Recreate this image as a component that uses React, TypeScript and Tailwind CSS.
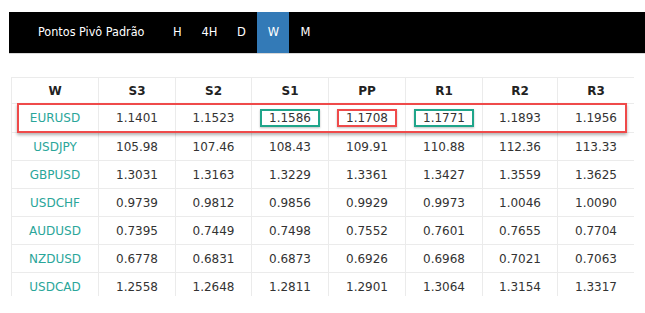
const tabs = ["H", "4H", "D", "W", "M"];

const cols = ["W", "S3", "S2", "S1", "PP", "R1", "R2", "R3"];

const rows: [string, string[]][] = [
  ["EURUSD", ["1.1401", "1.1523", "1.1586", "1.1708", "1.1771", "1.1893", "1.1956"]],
  ["USDJPY", ["105.98", "107.46", "108.43", "109.91", "110.88", "112.36", "113.33"]],
  ["GBPUSD", ["1.3031", "1.3163", "1.3229", "1.3361", "1.3427", "1.3559", "1.3625"]],
  ["USDCHF", ["0.9739", "0.9812", "0.9856", "0.9929", "0.9973", "1.0046", "1.0090"]],
  ["AUDUSD", ["0.7395", "0.7449", "0.7498", "0.7552", "0.7601", "0.7655", "0.7704"]],
  ["NZDUSD", ["0.6778", "0.6831", "0.6873", "0.6926", "0.6968", "0.7021", "0.7063"]],
  ["USDCAD", ["1.2558", "1.2648", "1.2811", "1.2901", "1.3064", "1.3154", "1.3317"]],
];

const widths = ["w-[87px]", "w-[77px]", "w-[76px]", "w-[77px]", "w-[77px]", "w-[77px]", "w-[75px]", "w-[77px]"];

// S1 and R1 get a green box, PP a red one
function Marked({ value, col }: { value: string; col: string }) {
  if (col === "S1" || col === "R1") {
    return (
      <span className="inline-block border-2 border-[#1fa58a] px-[7px] leading-[14px] shadow-[0_1px_2px_rgba(0,0,0,0.25)]">
        {value}
      </span>
    );
  }
  if (col === "PP") {
    return (
      <span className="inline-block border-2 border-[#ef4a4a] px-[7px] leading-[14px] shadow-[0_1px_2px_rgba(0,0,0,0.25)]">
        {value}
      </span>
    );
  }
  return <>{value}</>;
}

export default function App() {
  return (
    <div className="h-[313px] w-[645px] overflow-hidden bg-white pt-3 font-['DejaVu_Sans',Verdana,sans-serif]">
      <nav className="ml-[9px] flex h-[42px] items-stretch border-b border-[#d8d8d8] bg-black text-white">
        <div className="flex items-center pl-[29px] pr-[17px] font-['DejaVu_Sans_Condensed','DejaVu_Sans',sans-serif] text-[12.5px]">
          Pontos Pivô Padrão
        </div>
        {tabs.map((t) => (
          <div
            key={t}
            className={`flex w-[32px] items-center justify-center text-[11.5px] ${
              t === "W" ? "bg-[#337ab7]" : ""
            }`}
          >
            {t}
          </div>
        ))}
      </nav>

      <div className="relative ml-[11px] mt-[23px] h-[219px] w-[623px] overflow-hidden">
        <table className="w-[623px] table-fixed border-collapse text-[12px]">
          <colgroup>
            {widths.map((w, i) => (
              <col key={i} className={w} />
            ))}
          </colgroup>
          <thead>
            <tr className="h-[26px]">
              {cols.map((c) => (
                <th key={c} className="border border-[#ebebeb] text-center font-bold text-[#222]">
                  {c}
                </th>
              ))}
            </tr>
          </thead>
          <tbody>
            {rows.map(([sym, vals], r) => (
              <tr key={sym} className={r === 0 ? "h-[29px]" : "h-[28px]"}>
                <td className="border border-[#ebebeb] text-center text-[#2aa69a]">{sym}</td>
                {vals.map((v, i) => (
                  <td key={i} className="border border-[#ebebeb] text-center text-[#333]">
                    {r === 0 ? <Marked value={v} col={cols[i + 1]} /> : v}
                  </td>
                ))}
              </tr>
            ))}
          </tbody>
        </table>
        <div className="absolute left-[6px] top-[26px] h-[30px] w-[610px] border-2 border-[#ef4a4a] shadow-[0_2px_3px_rgba(0,0,0,0.3)]" />
      </div>
    </div>
  );
}
